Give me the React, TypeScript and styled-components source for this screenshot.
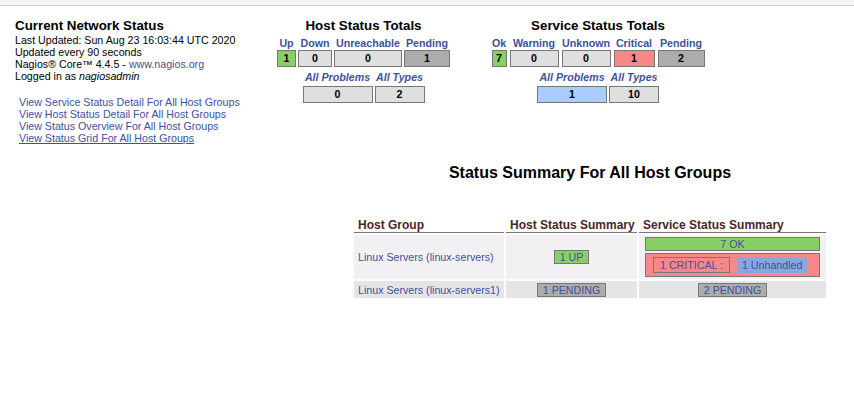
import styled, { createGlobalStyle } from "styled-components";

const GlobalStyle = createGlobalStyle`
  html, body {
    margin: 0;
    padding: 0;
    background: #ffffff;
  }
  body {
    font-family: "Liberation Sans", Arial, sans-serif;
    color: #000000;
  }
`;

const LINK = "#40509d";
const BORDER = "#777777";

const tones: Record<string, string> = {
  up: "#88d066",
  ok: "#88d066",
  none: "#dfdfdf",
  pending: "#acacac",
  critical: "#f88888",
  problems: "#aaccff",
  unhandled: "#86a9dd",
};

const TopBand = styled.div`
  height: 5px;
  background: #f4f4f4;
  border-bottom: 1px solid #d4d4d4;
`;

const TopRow = styled.div`
  display: flex;
  align-items: flex-start;
  padding-top: 12px;
`;

const InfoCol = styled.div`
  width: 262px;
  padding-left: 15px;
`;

const InfoTitle = styled.div`
  font-size: 13.33px;
  font-weight: bold;
  line-height: 15px;
  margin-bottom: 1px;
  white-space: nowrap;
`;

const InfoLine = styled.div`
  font-size: 10.67px;
  line-height: 12px;
  white-space: nowrap;
`;

const Link = styled.a<{ $hover?: boolean }>`
  color: ${LINK};
  text-decoration: ${(p) => (p.$hover ? "underline" : "none")};
  cursor: pointer;
`;

const LinkList = styled.div`
  display: flex;
  flex-direction: column;
  align-items: flex-start;
  margin-top: 14px;
  padding-left: 4px;
  font-size: 10.67px;
  line-height: 12px;
  white-space: nowrap;
`;

const TotalsBlock = styled.div<{ $width: number; $offset: number }>`
  width: ${(p) => p.$width}px;
  margin-left: ${(p) => p.$offset}px;
  display: flex;
  flex-direction: column;
  align-items: center;
`;

const TotalsTitle = styled.div`
  font-size: 13.33px;
  font-weight: bold;
  line-height: 15px;
  margin-bottom: 4px;
  white-space: nowrap;
`;

const TotalsGrid = styled.div<{ $cols: string; $gap: number; $rowGap: number; $top?: number }>`
  display: grid;
  grid-template-columns: ${(p) => p.$cols};
  column-gap: ${(p) => p.$gap}px;
  row-gap: ${(p) => p.$rowGap}px;
  margin-top: ${(p) => p.$top ?? 0}px;
`;

const TotalsHead = styled.div<{ $italic?: boolean }>`
  font-size: 10.67px;
  font-weight: bold;
  font-style: ${(p) => (p.$italic ? "italic" : "normal")};
  line-height: 12px;
  color: ${LINK};
  text-align: center;
  white-space: nowrap;
`;

const TotalsCell = styled.div<{ $tone: string }>`
  box-sizing: border-box;
  height: 17px;
  border: 1px solid ${BORDER};
  background: ${(p) => tones[p.$tone]};
  font-size: 10.67px;
  font-weight: bold;
  line-height: 15px;
  text-align: center;
`;

const Summary = styled.section`
  margin-left: 354px;
  width: 472px;
  margin-top: 20px;
`;

const SummaryTitle = styled.div`
  font-size: 16px;
  font-weight: bold;
  line-height: 18px;
  text-align: center;
  margin-bottom: 36px;
  white-space: nowrap;
`;

const GroupTable = styled.div`
  display: grid;
  grid-template-columns: 150px 131px 187px;
  grid-template-rows: 15px 44px 17px;
  column-gap: 2px;
  row-gap: 2px;
`;

const HeadCell = styled.div`
  box-sizing: border-box;
  padding-left: 4px;
  font-size: 12px;
  font-weight: bold;
  line-height: 14px;
  color: #4d2626;
  border-bottom: 1px solid ${BORDER};
  white-space: nowrap;
`;

const BodyCell = styled.div<{ $shade: string; $align?: string }>`
  box-sizing: border-box;
  display: flex;
  align-items: center;
  justify-content: ${(p) => p.$align ?? "flex-start"};
  background: ${(p) => p.$shade};
  padding-left: ${(p) => (p.$align ? 0 : 4)}px;
  font-size: 10.67px;
  white-space: nowrap;
`;

const ServiceStack = styled.div<{ $shade: string }>`
  box-sizing: border-box;
  display: flex;
  flex-direction: column;
  justify-content: center;
  gap: 2px;
  padding: 0 6px;
  background: ${(p) => p.$shade};
`;

const Badge = styled.a<{ $tone: string; $wide?: boolean }>`
  display: block;
  box-sizing: border-box;
  border: 1px solid ${BORDER};
  background: ${(p) => tones[p.$tone]};
  color: ${LINK};
  text-decoration: none;
  font-size: 10.67px;
  line-height: 12px;
  padding: 0 5px;
  text-align: center;
  width: ${(p) => (p.$wide ? "100%" : "auto")};
`;

const ProblemBox = styled.div`
  box-sizing: border-box;
  display: flex;
  align-items: center;
  gap: 7px;
  height: 24px;
  padding-left: 7px;
  border: 1px solid ${BORDER};
  background: ${tones.critical};
`;

const CriticalTag = styled.a`
  box-sizing: border-box;
  border: 1px solid ${BORDER};
  color: ${LINK};
  text-decoration: none;
  font-size: 10.67px;
  line-height: 14px;
  padding: 0 6px;
`;

const UnhandledTag = styled.a`
  background: ${tones.unhandled};
  color: ${LINK};
  text-decoration: none;
  font-size: 10.67px;
  line-height: 15px;
  padding: 0 5px;
`;

const hostTotals = [
  { label: "Up", value: "1", tone: "up" },
  { label: "Down", value: "0", tone: "none" },
  { label: "Unreachable", value: "0", tone: "none" },
  { label: "Pending", value: "1", tone: "pending" },
];

const serviceTotals = [
  { label: "Ok", value: "7", tone: "ok" },
  { label: "Warning", value: "0", tone: "none" },
  { label: "Unknown", value: "0", tone: "none" },
  { label: "Critical", value: "1", tone: "critical" },
  { label: "Pending", value: "2", tone: "pending" },
];

const links = [
  "View Service Status Detail For All Host Groups",
  "View Host Status Detail For All Host Groups",
  "View Status Overview For All Host Groups",
  "View Status Grid For All Host Groups",
];

const App = () => {
  return (
    <>
      <GlobalStyle />
      <TopBand />
      <TopRow>
        <InfoCol>
          <InfoTitle>Current Network Status</InfoTitle>
          <InfoLine>Last Updated: Sun Aug 23 16:03:44 UTC 2020</InfoLine>
          <InfoLine>Updated every 90 seconds</InfoLine>
          <InfoLine>
            Nagios® Core™ 4.4.5 - <Link>www.nagios.org</Link>
          </InfoLine>
          <InfoLine>
            Logged in as <i>nagiosadmin</i>
          </InfoLine>
          <LinkList>
            {links.map((text, i) => (
              <Link key={text} $hover={i === links.length - 1}>
                {text}
              </Link>
            ))}
          </LinkList>
        </InfoCol>

        <TotalsBlock $width={173} $offset={0}>
          <TotalsTitle>Host Status Totals</TotalsTitle>
          <TotalsGrid $cols="19px 34px 68px 46px" $gap={2} $rowGap={1}>
            {hostTotals.map((t) => (
              <TotalsHead key={t.label}>{t.label}</TotalsHead>
            ))}
            {hostTotals.map((t) => (
              <TotalsCell key={t.label} $tone={t.tone}>
                {t.value}
              </TotalsCell>
            ))}
          </TotalsGrid>
          <TotalsGrid $cols="70px 50px" $gap={2} $rowGap={3} $top={4}>
            <TotalsHead $italic>All Problems</TotalsHead>
            <TotalsHead $italic>All Types</TotalsHead>
            <TotalsCell $tone="none">0</TotalsCell>
            <TotalsCell $tone="none">2</TotalsCell>
          </TotalsGrid>
        </TotalsBlock>

        <TotalsBlock $width={214} $offset={41}>
          <TotalsTitle>Service Status Totals</TotalsTitle>
          <TotalsGrid $cols="15px 49px 49px 41px 47px" $gap={3} $rowGap={1}>
            {serviceTotals.map((t) => (
              <TotalsHead key={t.label}>{t.label}</TotalsHead>
            ))}
            {serviceTotals.map((t) => (
              <TotalsCell key={t.label} $tone={t.tone}>
                {t.value}
              </TotalsCell>
            ))}
          </TotalsGrid>
          <TotalsGrid $cols="70px 50px" $gap={2} $rowGap={3} $top={4}>
            <TotalsHead $italic>All Problems</TotalsHead>
            <TotalsHead $italic>All Types</TotalsHead>
            <TotalsCell $tone="problems">1</TotalsCell>
            <TotalsCell $tone="none">10</TotalsCell>
          </TotalsGrid>
        </TotalsBlock>
      </TopRow>

      <Summary>
        <SummaryTitle>Status Summary For All Host Groups</SummaryTitle>
        <GroupTable>
          <HeadCell>Host Group</HeadCell>
          <HeadCell>Host Status Summary</HeadCell>
          <HeadCell>Service Status Summary</HeadCell>

          <BodyCell $shade="#f2f0f2">
            <Link>Linux Servers (linux-servers)</Link>
          </BodyCell>
          <BodyCell $shade="#f2f0f2" $align="center">
            <Badge $tone="up">1 UP</Badge>
          </BodyCell>
          <ServiceStack $shade="#f2f0f2">
            <Badge $tone="ok" $wide>
              7 OK
            </Badge>
            <ProblemBox>
              <CriticalTag>1 CRITICAL :</CriticalTag>
              <UnhandledTag>1 Unhandled</UnhandledTag>
            </ProblemBox>
          </ServiceStack>

          <BodyCell $shade="#e5e5e5">
            <Link>Linux Servers (linux-servers1)</Link>
          </BodyCell>
          <BodyCell $shade="#e5e5e5" $align="center">
            <Badge $tone="pending">1 PENDING</Badge>
          </BodyCell>
          <BodyCell $shade="#e5e5e5" $align="center">
            <Badge $tone="pending">2 PENDING</Badge>
          </BodyCell>
        </GroupTable>
      </Summary>
    </>
  );
};

export default App;
